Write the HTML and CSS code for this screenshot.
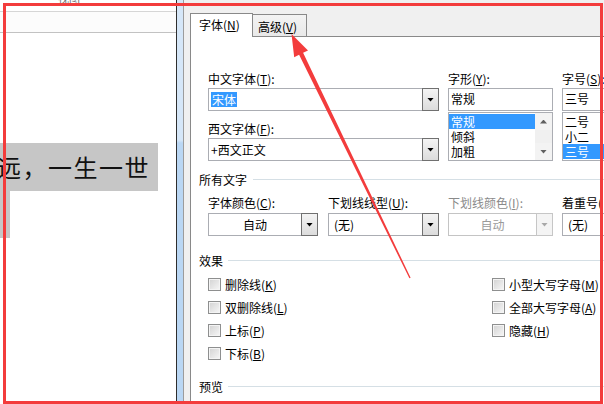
FILE: index.html
```html
<!DOCTYPE html>
<html lang="zh-CN">
<head>
<meta charset="utf-8">
<title>字体</title>
<link rel="stylesheet" href="styles.css">
</head>
<body>
<div class="screen">
  <div class="doc">
    <div class="doc-top"><span class="cut">视图</span></div>
    <div class="doc-ruler"></div>
    <div class="doc-body">
      <div class="hl hl1">远，一生一世</div>
      <div class="hl hl2"></div>
    </div>
  </div>
  <div class="vscroll"></div>
  <div class="dialog">
    <div class="tabs">
      <div class="tab active">字体(<u>N</u>)</div>
      <div class="tab inactive">高级(<u>V</u>)</div>
    </div>
    <div class="panel">
      <div class="top-grid">
        <div class="col1">
          <div class="lbl">中文字体(<u>T</u>):</div>
          <div class="combo"><div class="val"><span class="sel">宋体</span></div><div class="btn"><i class="tri"></i></div></div>
          <div class="lbl lbl2">西文字体(<u>F</u>):</div>
          <div class="combo"><div class="val">+西文正文</div><div class="btn"><i class="tri"></i></div></div>
        </div>
        <div class="col2">
          <div class="lbl">字形(<u>Y</u>):</div>
          <div class="edit">常规</div>
          <div class="listbox">
            <div class="items">
              <div class="item on">常规</div>
              <div class="item">倾斜</div>
              <div class="item">加粗</div>
            </div>
            <div class="lscroll">
              <div class="sbtn"><i class="tri up"></i></div>
              <div class="sbtn"><i class="tri"></i></div>
            </div>
          </div>
        </div>
        <div class="col3">
          <div class="lbl">字号(<u>S</u>):</div>
          <div class="edit">三号</div>
          <div class="listbox">
            <div class="items">
              <div class="item">二号</div>
              <div class="item">小二</div>
              <div class="item on">三号</div>
            </div>
          </div>
        </div>
      </div>

      <div class="sec sec1">所有文字</div>

      <div class="row2">
        <div class="f f1">
          <div class="lbl">字体颜色(<u>C</u>):</div>
          <div class="combo"><div class="val center">自动</div><div class="btn"><i class="tri"></i></div></div>
        </div>
        <div class="f f2">
          <div class="lbl">下划线线型(<u>U</u>):</div>
          <div class="combo"><div class="val pad">(无)</div><div class="btn"><i class="tri"></i></div></div>
        </div>
        <div class="f f3">
          <div class="lbl dis">下划线颜色(<u>I</u>):</div>
          <div class="combo disabled"><div class="val center">自动</div><div class="btn"><i class="tri"></i></div></div>
        </div>
        <div class="f f4">
          <div class="lbl">着重号(·):</div>
          <div class="combo"><div class="val pad">(无)</div></div>
        </div>
      </div>

      <div class="sec sec2">效果</div>

      <div class="effects">
        <div class="ecol left">
          <div class="chk"><i class="box"></i>删除线(<u>K</u>)</div>
          <div class="chk"><i class="box"></i>双删除线(<u>L</u>)</div>
          <div class="chk"><i class="box"></i>上标(<u>P</u>)</div>
          <div class="chk"><i class="box"></i>下标(<u>B</u>)</div>
        </div>
        <div class="ecol">
          <div class="chk"><i class="box"></i>小型大写字母(<u>M</u>)</div>
          <div class="chk"><i class="box"></i>全部大写字母(<u>A</u>)</div>
          <div class="chk"><i class="box"></i>隐藏(<u>H</u>)</div>
        </div>
      </div>

      <div class="sec sec3">预览</div>
    </div>
  </div>

  <div class="frame"></div>
  <svg class="arrow" width="604" height="404" viewBox="0 0 604 404">
    <polygon points="291.5,34 308,50.5 303.1,52.8 410.6,277.7 409.4,278.3 299.1,54.8 294.2,57.2" fill="#f33c3c"/>
  </svg>
</div>
</body>
</html>
```

FILE: styles.css
```css
* { box-sizing: border-box; }
html, body { margin: 0; padding: 0; }
body {
  width: 604px;
  height: 404px;
  overflow: hidden;
  background: #fff;
  font-family: "Noto Sans CJK SC", "Noto Sans", sans-serif;
  font-size: 12px;
  color: #000;
}
u { text-decoration: underline; text-underline-offset: 1px; }

.screen {
  position: relative;
  display: flex;
  width: 604px;
  height: 404px;
  overflow: hidden;
}

/* document area */
.doc {
  width: 177px;
  flex: none;
  border-right: 1px solid #2e2e2e;
  background: #fff;
}
.doc-top {
  height: 12px;
  border-bottom: 1px solid #d6d6d6;
  overflow: hidden;
  padding-left: 58px;
}
.cut {
  display: block;
  font-size: 11px;
  line-height: 11px;
  margin-top: -7px;
  color: #6a6a6a;
}
.doc-ruler {
  height: 21px;
  background: #fcfcfc;
  border-bottom: 1px solid #c2c2c2;
}
.hl { background: #c6c6c6; }
.hl1 {
  margin-top: 110px;
  width: 158px;
  height: 48px;
  font-size: 24px;
  line-height: 48px;
  letter-spacing: 1.5px;
  text-indent: -3px;
  white-space: nowrap;
  overflow: hidden;
  color: #111;
}
.hl2 { width: 10px; height: 47px; }

.vscroll {
  width: 7px;
  flex: none;
  border-right: 1px solid #9c9c9c;
  background: linear-gradient(#d6e7f8 0, #d6e7f8 140px, #bad7f4 143px, #bad7f4 100%);
}

/* dialog */
.dialog {
  flex: 1;
  display: flex;
  flex-direction: column;
  background: #f0f0f0;
  padding: 13px 0 0 6px;
  min-width: 0;
}
.tabs {
  display: flex;
  align-items: flex-end;
  height: 23px;
  flex: none;
}
.tab {
  line-height: 16px;
  border: 1px solid #898989;
  border-bottom: 0;
  white-space: nowrap;
}
.tab.active {
  position: relative;
  z-index: 1;
  width: 63px;
  height: 24px;
  margin-bottom: -1px;
  background: #fff;
  padding: 3px 0 0 8px;
}
.tab.inactive {
  width: 55px;
  height: 22px;
  margin-left: -1px;
  background: linear-gradient(#f3f3f3, #e9e9e9);
  padding: 4px 0 0 5px;
}
.panel {
  flex: 1;
  background: #fff;
  border-top: 1px solid #898989;
  border-left: 1px solid #898989;
  padding: 33px 0 0 8px;
  min-width: 0;
}

.lbl {
  height: 17px;
  line-height: 17px;
  white-space: nowrap;
  margin-bottom: 1px;
}
.lbl2 { margin-top: 9px; }
.dis { color: #8a8a8a; }

.top-grid {
  display: flex;
  margin-left: 9px;
}
.col1 { width: 231px; flex: none; margin-right: 9px; }
.col2 { width: 105px; flex: none; margin-right: 9px; }
.col3 { width: 90px; flex: none; }

.combo {
  display: flex;
  align-items: center;
  height: 23px;
  border: 1px solid #abadb3;
  background: #fff;
  white-space: nowrap;
}
.combo .val {
  flex: 1;
  min-width: 0;
  padding-left: 2px;
  line-height: 16px;
}
.combo .val.center { text-align: center; padding-left: 0; }
.combo .val.pad { padding-left: 5px; }
.combo .btn {
  align-self: stretch;
  width: 17px;
  flex: none;
  margin: -1px -1px -1px 0;
  border: 1px solid #707070;
  background: linear-gradient(#f4f4f4, #dcdcdc);
  display: flex;
  align-items: center;
  justify-content: center;
}
.tri {
  display: block;
  width: 7px;
  height: 4px;
  background: #000;
  clip-path: polygon(0 0, 100% 0, 50% 100%);
}
.tri.up { clip-path: polygon(50% 0, 100% 100%, 0 100%); }

.combo.disabled { border-color: #c4c4c4; color: #9a9a9a; }
.combo.disabled .btn {
  border-color: #c6c6c6;
  background: #f4f4f4;
}
.combo.disabled .tri { background: #a8a8a8; }

.sel {
  background: #3399ff;
  color: #fff;
  padding: 0 1px;
  display: inline-block;
  line-height: 15px;
}

.edit {
  height: 23px;
  border: 1px solid #abadb3;
  background: #fff;
  line-height: 20px;
  padding-left: 2px;
  white-space: nowrap;
}
.listbox {
  display: flex;
  height: 49px;
  margin-top: 1px;
  border: 1px solid #abadb3;
  background: #fff;
  padding-top: 1px;
}
.items { flex: 1; min-width: 0; }
.item {
  height: 15px;
  line-height: 15px;
  padding-left: 2px;
  white-space: nowrap;
}
.item.on { background: #3399ff; color: #fff; }
.lscroll {
  width: 17px;
  flex: none;
  margin-top: -1px;
  background: #f0f0f0;
  display: flex;
  flex-direction: column;
  justify-content: space-between;
}
.sbtn {
  height: 17px;
  display: flex;
  align-items: center;
  justify-content: center;
  background: #f3f3f3;
}
.sbtn .tri { background: #606060; }

/* section headers */
.sec {
  display: flex;
  align-items: center;
  height: 17px;
  line-height: 17px;
  white-space: nowrap;
}
.sec::after {
  content: "";
  flex: 1;
  height: 1px;
  background: #d5dfe5;
  margin-left: 5px;
}
.sec1 { margin-top: 10px; }
.sec1::after { margin-left: 6px; }
.sec2 { margin-top: 16px; }
.sec3 { margin-top: 13px; }

.row2 {
  display: flex;
  margin-top: 6px;
  margin-left: 9px;
}
.row2 .lbl { margin-bottom: 2px; }
.f { flex: none; }
.f1 { width: 110px; margin-right: 10px; }
.f2 { width: 111px; margin-right: 9px; }
.f3 { width: 105px; margin-right: 9px; }
.f4 { width: 90px; }

.effects {
  display: flex;
  margin-top: 4px;
  margin-left: 9px;
}
.ecol.left { width: 284px; flex: none; }
.chk {
  display: flex;
  align-items: center;
  height: 23px;
  white-space: nowrap;
}
.box {
  display: block;
  width: 13px;
  height: 13px;
  flex: none;
  margin-right: 4px;
  border: 1px solid #8e8f8f;
  background: linear-gradient(135deg, #d2d2d2, #f7f7f7);
  box-shadow: inset 0 0 0 1px #f4f4f4;
}

/* overlays */
.frame {
  position: absolute;
  left: 3px;
  top: 3px;
  right: 1px;
  bottom: 0;
  border: 3px solid #f33c3c;
  pointer-events: none;
}
.arrow {
  position: absolute;
  left: 0;
  top: 0;
  pointer-events: none;
}
```
